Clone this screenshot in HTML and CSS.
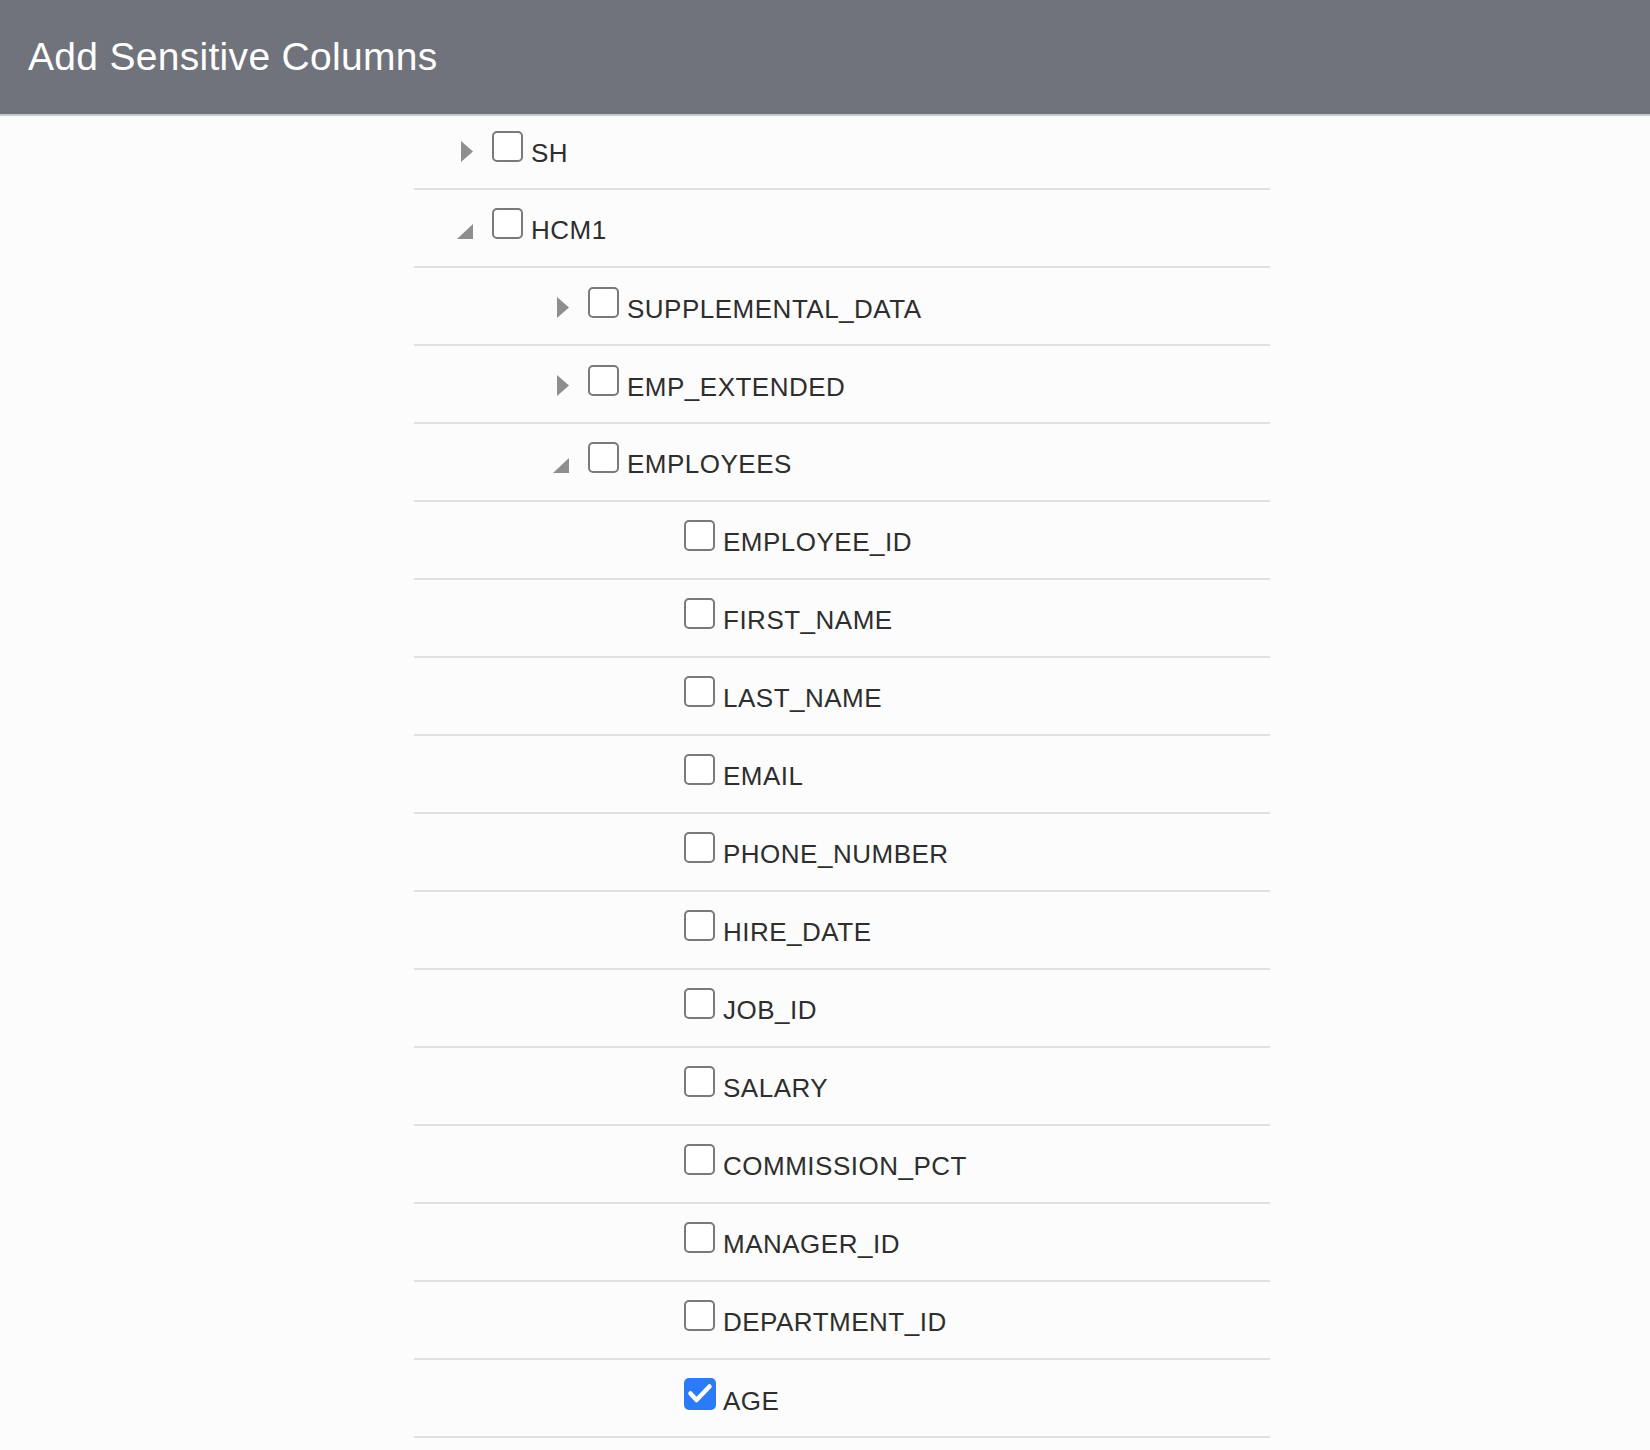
FILE: index.html
```html
<!DOCTYPE html>
<html lang="en">
<head>
<meta charset="utf-8">
<title>Add Sensitive Columns</title>
<link rel="stylesheet" href="styles.css">
</head>
<body>
<header class="header">
  <h1 class="title">Add Sensitive Columns</h1>
</header>
<ul class="tree">
  <li class="row first lvl0">
    <span class="toggle"><svg class="tri-r" viewBox="0 0 12 21"><path d="M0 0L12 10.5L0 21Z"/></svg></span>
    <span class="cb"></span><span class="label">SH</span>
  </li>
  <li class="row lvl0">
    <span class="toggle"><svg class="tri-d" viewBox="0 0 16 15"><path d="M16 0L16 15L0 15Z"/></svg></span>
    <span class="cb"></span><span class="label">HCM1</span>
  </li>
  <li class="row lvl1">
    <span class="toggle"><svg class="tri-r" viewBox="0 0 12 21"><path d="M0 0L12 10.5L0 21Z"/></svg></span>
    <span class="cb"></span><span class="label">SUPPLEMENTAL_DATA</span>
  </li>
  <li class="row lvl1">
    <span class="toggle"><svg class="tri-r" viewBox="0 0 12 21"><path d="M0 0L12 10.5L0 21Z"/></svg></span>
    <span class="cb"></span><span class="label">EMP_EXTENDED</span>
  </li>
  <li class="row lvl1">
    <span class="toggle"><svg class="tri-d" viewBox="0 0 16 15"><path d="M16 0L16 15L0 15Z"/></svg></span>
    <span class="cb"></span><span class="label">EMPLOYEES</span>
  </li>
  <li class="row lvl2"><span class="toggle"></span><span class="cb"></span><span class="label">EMPLOYEE_ID</span></li>
  <li class="row lvl2"><span class="toggle"></span><span class="cb"></span><span class="label">FIRST_NAME</span></li>
  <li class="row lvl2"><span class="toggle"></span><span class="cb"></span><span class="label">LAST_NAME</span></li>
  <li class="row lvl2"><span class="toggle"></span><span class="cb"></span><span class="label">EMAIL</span></li>
  <li class="row lvl2"><span class="toggle"></span><span class="cb"></span><span class="label">PHONE_NUMBER</span></li>
  <li class="row lvl2"><span class="toggle"></span><span class="cb"></span><span class="label">HIRE_DATE</span></li>
  <li class="row lvl2"><span class="toggle"></span><span class="cb"></span><span class="label">JOB_ID</span></li>
  <li class="row lvl2"><span class="toggle"></span><span class="cb"></span><span class="label">SALARY</span></li>
  <li class="row lvl2"><span class="toggle"></span><span class="cb"></span><span class="label">COMMISSION_PCT</span></li>
  <li class="row lvl2"><span class="toggle"></span><span class="cb"></span><span class="label">MANAGER_ID</span></li>
  <li class="row lvl2"><span class="toggle"></span><span class="cb"></span><span class="label">DEPARTMENT_ID</span></li>
  <li class="row lvl2">
    <span class="toggle"></span>
    <span class="cb checked"><svg viewBox="0 0 32 32"><path d="M6.5 15.5L12.5 22L25.5 8.5"/></svg></span><span class="label">AGE</span>
  </li>
</ul>
</body>
</html>
```

FILE: styles.css
```css
html, body {
  margin: 0;
  padding: 0;
  background: #fcfcfc;
  font-family: "Liberation Sans", Arial, sans-serif;
}

.header {
  height: 114px;
  background: #70737b;
  border-bottom: 2px solid #c8c9cd;
}

.title {
  margin: 0;
  padding-left: 28px;
  font-size: 39px;
  letter-spacing: 0.3px;
  font-weight: normal;
  line-height: 114px;
  color: #ffffff;
}

.tree {
  list-style: none;
  margin: 0 0 0 414px;
  padding: 0;
  width: 856px;
}

.row {
  display: flex;
  align-items: baseline;
  box-sizing: border-box;
  height: 78px;
  padding-top: 18px;
  border-bottom: 2px solid #e0e0e0;
}

.row.first {
  height: 74px;
  padding-top: 14px;
}

.lvl0 { padding-left: 35px; }
.lvl1 { padding-left: 131px; }
.lvl2 { padding-left: 227px; }

.toggle {
  display: flex;
  align-items: flex-end;
  justify-content: flex-end;
  width: 24px;
  height: 31px;
  margin-right: 19px;
}

.tri-r {
  display: block;
  width: 12px;
  height: 21px;
  margin-bottom: -1px;
  fill: #8e8e8e;
}

.tri-d {
  display: block;
  width: 16px;
  height: 15px;
  fill: #8e8e8e;
}

.cb {
  display: inline-block;
  box-sizing: border-box;
  width: 31px;
  height: 31px;
  border: 2px solid #7a7a7a;
  border-radius: 5px;
  background: #ffffff;
  margin-right: 8px;
}

.cb.checked {
  border: none;
  width: 32px;
  height: 32px;
  margin-right: 7px;
  background: #2b7bf6;
}

.cb.checked svg {
  display: block;
  width: 32px;
  height: 32px;
  fill: none;
  stroke: #ffffff;
  stroke-width: 4.5;
  stroke-linecap: round;
  stroke-linejoin: round;
}

.label {
  font-size: 26px;
  letter-spacing: 0.5px;
  line-height: 1;
  color: #2e2e2e;
}
```
